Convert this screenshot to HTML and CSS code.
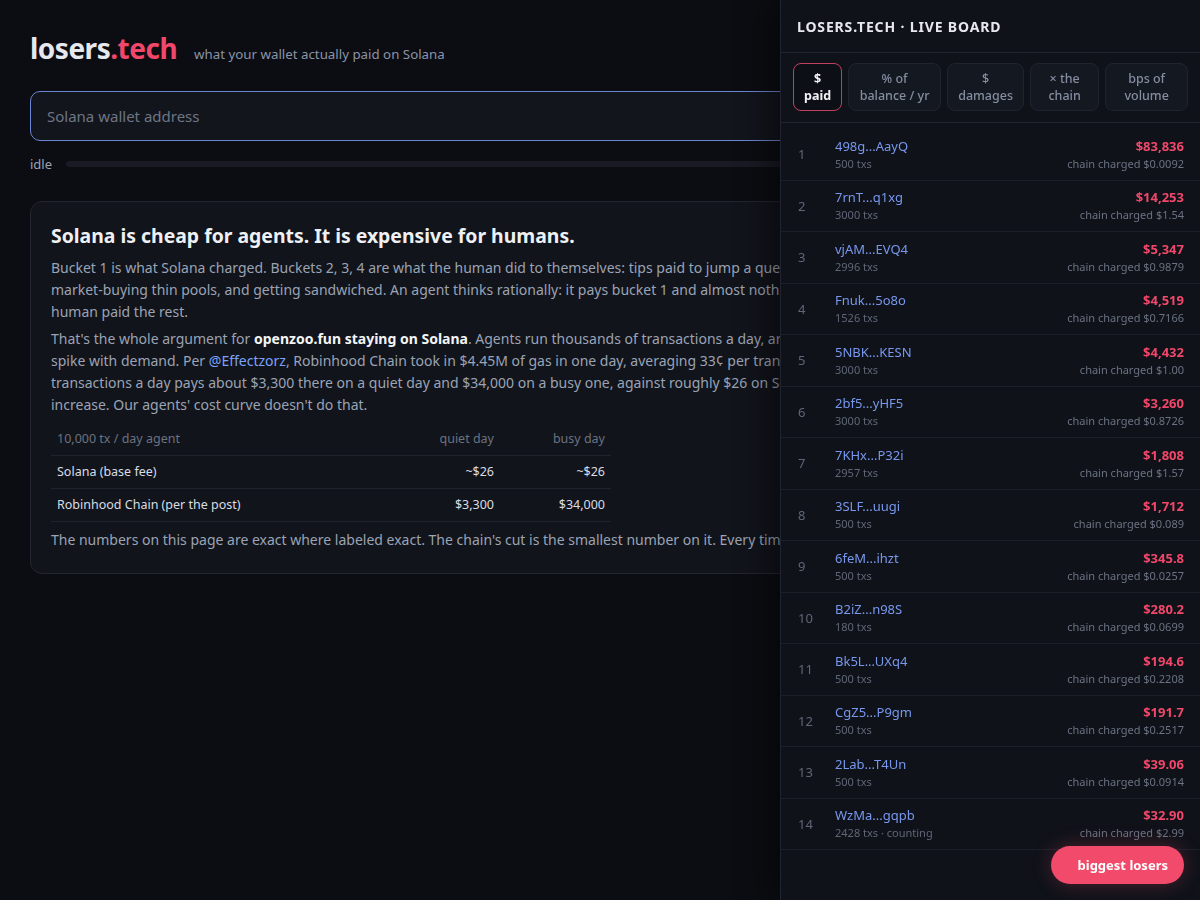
FILE: index.html
```html
<!DOCTYPE html>
<html lang="en">
<head>
<meta charset="utf-8">
<title>losers.tech</title>
<link rel="stylesheet" href="styles.css">
</head>
<body>
<main class="main">
  <header class="top">
    <h1 class="logo">losers<span class="logo-dot">.tech</span></h1>
    <span class="tagline">what your wallet actually paid on Solana</span>
  </header>
  <input class="wallet" type="text" placeholder="Solana wallet address">
  <div class="status">
    <span class="status-label">idle</span>
    <div class="progress"></div>
  </div>
  <section class="card">
    <h2 class="card-title">Solana is cheap for agents. It is expensive for humans.</h2>
    <p class="copy">Bucket 1 is what Solana charged. Buckets 2, 3, 4 are what the human did to themselves: tips paid to jump a queue, slippage from<br>market-buying thin pools, and getting sandwiched. An agent thinks rationally: it pays bucket 1 and almost nothing else. The<br>human paid the rest.</p>
    <p class="copy">That's the whole argument for <strong>openzoo.fun staying on Solana</strong>. Agents run thousands of transactions a day, around the clock, and fees<br>spike with demand. Per <a class="link" href="#">@Effectzorz</a>, Robinhood Chain took in $4.45M of gas in one day, averaging 33¢ per transaction. An agent doing 10,000<br>transactions a day pays about $3,300 there on a quiet day and $34,000 on a busy one, against roughly $26 on Solana with no<br>increase. Our agents' cost curve doesn't do that.</p>
    <table class="cost">
      <thead>
        <tr><th>10,000 tx / day agent</th><th class="num">quiet day</th><th class="num">busy day</th></tr>
      </thead>
      <tbody>
        <tr><td>Solana (base fee)</td><td class="num">~$26</td><td class="num">~$26</td></tr>
        <tr><td>Robinhood Chain (per the post)</td><td class="num">$3,300</td><td class="num">$34,000</td></tr>
      </tbody>
    </table>
    <p class="copy last">The numbers on this page are exact where labeled exact. The chain's cut is the smallest number on it. Every time.</p>
  </section>
</main>

<aside class="board">
  <div class="board-head">LOSERS.TECH · LIVE BOARD</div>
  <div class="tabs">
    <button class="tab active">$ paid</button>
    <button class="tab">% of balance&nbsp;/&nbsp;yr</button>
    <button class="tab">$ damages</button>
    <button class="tab">× the chain</button>
    <button class="tab">bps of volume</button>
  </div>
  <ol class="rows">
    <li class="row"><span class="rank">1</span><span class="who"><span class="addr">498g...AayQ</span><span class="txs">500 txs</span></span><span class="money"><span class="amt">$83,836</span><span class="chain">chain charged $0.0092</span></span></li>
    <li class="row"><span class="rank">2</span><span class="who"><span class="addr">7rnT...q1xg</span><span class="txs">3000 txs</span></span><span class="money"><span class="amt">$14,253</span><span class="chain">chain charged $1.54</span></span></li>
    <li class="row"><span class="rank">3</span><span class="who"><span class="addr">vjAM...EVQ4</span><span class="txs">2996 txs</span></span><span class="money"><span class="amt">$5,347</span><span class="chain">chain charged $0.9879</span></span></li>
    <li class="row"><span class="rank">4</span><span class="who"><span class="addr">Fnuk...5o8o</span><span class="txs">1526 txs</span></span><span class="money"><span class="amt">$4,519</span><span class="chain">chain charged $0.7166</span></span></li>
    <li class="row"><span class="rank">5</span><span class="who"><span class="addr">5NBK...KESN</span><span class="txs">3000 txs</span></span><span class="money"><span class="amt">$4,432</span><span class="chain">chain charged $1.00</span></span></li>
    <li class="row"><span class="rank">6</span><span class="who"><span class="addr">2bf5...yHF5</span><span class="txs">3000 txs</span></span><span class="money"><span class="amt">$3,260</span><span class="chain">chain charged $0.8726</span></span></li>
    <li class="row"><span class="rank">7</span><span class="who"><span class="addr">7KHx...P32i</span><span class="txs">2957 txs</span></span><span class="money"><span class="amt">$1,808</span><span class="chain">chain charged $1.57</span></span></li>
    <li class="row"><span class="rank">8</span><span class="who"><span class="addr">3SLF...uugi</span><span class="txs">500 txs</span></span><span class="money"><span class="amt">$1,712</span><span class="chain">chain charged $0.089</span></span></li>
    <li class="row"><span class="rank">9</span><span class="who"><span class="addr">6feM...ihzt</span><span class="txs">500 txs</span></span><span class="money"><span class="amt">$345.8</span><span class="chain">chain charged $0.0257</span></span></li>
    <li class="row"><span class="rank">10</span><span class="who"><span class="addr">B2iZ...n98S</span><span class="txs">180 txs</span></span><span class="money"><span class="amt">$280.2</span><span class="chain">chain charged $0.0699</span></span></li>
    <li class="row"><span class="rank">11</span><span class="who"><span class="addr">Bk5L...UXq4</span><span class="txs">500 txs</span></span><span class="money"><span class="amt">$194.6</span><span class="chain">chain charged $0.2208</span></span></li>
    <li class="row"><span class="rank">12</span><span class="who"><span class="addr">CgZ5...P9gm</span><span class="txs">500 txs</span></span><span class="money"><span class="amt">$191.7</span><span class="chain">chain charged $0.2517</span></span></li>
    <li class="row"><span class="rank">13</span><span class="who"><span class="addr">2Lab...T4Un</span><span class="txs">500 txs</span></span><span class="money"><span class="amt">$39.06</span><span class="chain">chain charged $0.0914</span></span></li>
    <li class="row"><span class="rank">14</span><span class="who"><span class="addr">WzMa...gqpb</span><span class="txs">2428 txs · counting</span></span><span class="money"><span class="amt">$32.90</span><span class="chain">chain charged $2.99</span></span></li>
  </ol>
</aside>

<button class="losers-btn">biggest losers</button>
</body>
</html>
```

FILE: styles.css
```css
* { box-sizing: border-box; }

html, body {
  margin: 0;
  background: #0b0d12;
  color: #e6e8ee;
  font-family: "Noto Sans", "Open Sans", sans-serif;
}

.main {
  padding: 28px 30px 40px;
}

.top {
  display: flex;
  align-items: baseline;
  gap: 17px;
  height: 40px;
}

.logo {
  margin: 0;
  font-size: 28px;
  line-height: 40px;
  font-weight: 700;
  letter-spacing: -0.5px;
  color: #e6e8ee;
}

.logo-dot { color: #f0476a; }

.tagline {
  font-size: 13.3px;
  color: #8b93a7;
}

.wallet {
  display: block;
  width: 100%;
  height: 50px;
  margin-top: 23px;
  padding: 0 16px;
  background: #12151c;
  border: 1px solid #6d86d4;
  border-radius: 10px;
  color: #e6e8ee;
  font-family: inherit;
  font-size: 15px;
  outline: none;
}

.wallet::placeholder { color: #6e7585; }

.status {
  display: flex;
  align-items: center;
  gap: 14px;
  margin-top: 14px;
  height: 18px;
}

.status-label {
  font-size: 13px;
  color: #9ba3b4;
}

.progress {
  flex: 1;
  height: 6px;
  border-radius: 3px;
  background: #181b24;
}

.card {
  margin-top: 28px;
  padding: 20px 20px 22px;
  background: #11141b;
  border: 1px solid #222631;
  border-radius: 12px;
}

.card-title {
  margin: 0 0 7px;
  font-size: 19.4px;
  line-height: 28px;
  font-weight: 700;
  color: #eef0f4;
}

.copy {
  margin: 0 0 5px;
  font-size: 14px;
  line-height: 22px;
  color: #9ba3b4;
  white-space: nowrap;
}

.copy strong { color: #f3f4f6; font-weight: 700; }

.link { color: #7aa2f7; text-decoration: none; }

.copy.last { margin: 7px 0 0; }

.cost {
  width: 560px;
  margin-top: 7px;
  border-collapse: collapse;
  font-size: 12.5px;
  line-height: 18px;
}

.cost th, .cost td {
  padding: 7px 6px;
  border-bottom: 1px solid #1f232d;
  text-align: left;
}

.cost th {
  font-weight: 400;
  color: #6b7280;
}

.cost td { color: #d9dce4; }

.cost .num {
  width: 111px;
  text-align: right;
}

/* live board */
.board {
  position: fixed;
  top: 0;
  right: 0;
  bottom: 0;
  width: 420px;
  background: #0f1219;
  border-left: 1px solid #1f2430;
  box-shadow: -12px 0 30px rgba(0, 0, 0, 0.45);
  overflow: hidden;
}

.board-head {
  height: 53px;
  padding: 0 16px;
  display: flex;
  align-items: center;
  border-bottom: 1px solid #1f2430;
  font-size: 14px;
  font-weight: 700;
  letter-spacing: 0.85px;
  color: #e6e8ee;
}

.tabs {
  display: flex;
  gap: 6px;
  padding: 10px 12px 11px 12px;
  border-bottom: 1px solid #1f2430;
}

.tab {
  flex: 0 1 auto;
  padding: 6px 10px;
  background: #141821;
  border: 1px solid #20242f;
  border-radius: 8px;
  color: #858da0;
  font-family: inherit;
  font-size: 12.5px;
  font-weight: 500;
  line-height: 17px;
  text-align: center;
}

.tab.active {
  background: #0c0f15;
  border-color: #c2405f;
  color: #f0f1f5;
  font-weight: 700;
}

.rows {
  list-style: none;
  margin: 0;
  padding: 6px 0 0;
}

.row {
  display: grid;
  grid-template-columns: 38px 1fr auto;
  align-items: center;
  padding: 7.75px 16px 7.75px 17px;
  border-bottom: 1px solid #1b1f29;
}

.rank {
  font-size: 13px;
  color: #5f6676;
}

.who, .money {
  display: flex;
  flex-direction: column;
}

.money { align-items: flex-end; }

.addr {
  font-size: 13px;
  line-height: 19px;
  color: #7898ee;
  margin-left: -1px;
}

.txs {
  font-size: 11px;
  line-height: 16px;
  color: #5f6676;
  margin-left: -1px;
}

.amt {
  font-size: 13px;
  line-height: 19px;
  font-weight: 700;
  color: #f0476a;
}

.chain {
  font-size: 11px;
  line-height: 16px;
  color: #6b7282;
}

.losers-btn {
  position: fixed;
  right: 16px;
  bottom: 16px;
  height: 38px;
  padding: 0 16px 0 27px;
  border: none;
  border-radius: 19px;
  background: #f24a6a;
  color: #fff;
  font-family: inherit;
  font-size: 13px;
  font-weight: 700;
  box-shadow: 0 0 20px rgba(242, 74, 106, 0.28);
}
```
